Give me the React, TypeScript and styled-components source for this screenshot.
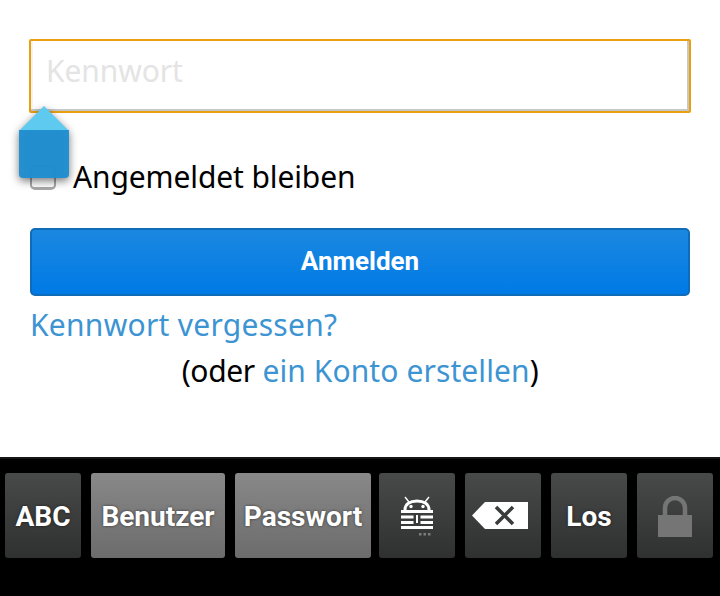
import React from 'react';
import styled, { createGlobalStyle } from 'styled-components';

const Global = createGlobalStyle`
    html, body {
        margin: 0;
        padding: 0;
        background: white;
    }
    body {
        font-family: "Noto Sans", "Open Sans", sans-serif;
    }
`;

const Page = styled.div`
    width: 720px;
    height: 596px;
    position: relative;
    overflow: hidden;
    display: flex;
    flex-direction: column;
`;

const Form = styled.div`
    height: 457px;
    box-sizing: border-box;
    padding: 39px 29px 0 29px;
    background: white;
`;

const PasswordField = styled.div`
    height: 74px;
    box-sizing: border-box;
    border: 2px solid #e8a010;
    border-radius: 2px;
    box-shadow: inset -2px -2px 0 #c4c8ca, inset 2px 0 0 #f4f4f4;
    padding: 0 15px 12px 15px;
    display: flex;
    align-items: center;
    font-size: 30px;
    letter-spacing: -0.1px;
    color: #e4e4e4;
`;

const RememberRow = styled.div`
    margin-top: 46px;
    padding-left: 1px;
    height: 36px;
    display: flex;
    align-items: center;
    gap: 17px;
    font-size: 30px;
    line-height: 34px;
    letter-spacing: -0.12px;
    color: #000;
`;

const Checkbox = styled.span`
    width: 26px;
    height: 25px;
    margin-top: 1px;
    box-sizing: border-box;
    border: 2px solid #a8a8a8;
    border-bottom-width: 3px;
    border-radius: 5px;
    background: #fff;
`;

const LoginButton = styled.div`
    margin: 33px 1px 0 1px;
    height: 68px;
    box-sizing: border-box;
    border: 2px solid #0f6cb8;
    border-radius: 5px;
    background: linear-gradient(#1b88e0, #007ae6);
    color: white;
    font-size: 26px;
    font-weight: 700;
    font-family: Roboto, sans-serif;
    padding-bottom: 2px;
    display: flex;
    align-items: center;
    justify-content: center;
`;

const Link = styled.a`
    color: #3d94d2;
`;

const SignupLink = styled(Link)`
    letter-spacing: 0.1px;
`;

const ForgotLine = styled.div`
    margin: 8px 0 0 1px;
    height: 42px;
    line-height: 42px;
    font-size: 30px;
    letter-spacing: 0.27px;
`;

const SignupLine = styled.div`
    margin-top: 4px;
    height: 42px;
    line-height: 42px;
    font-size: 30px;
    letter-spacing: -0.33px;
    text-align: center;
    color: #000;
`;

const Handle = styled.svg`
    position: absolute;
    left: 9px;
    top: 100px;
    filter: drop-shadow(0 3px 4px rgba(0, 0, 0, 0.55));
`;

const Keyboard = styled.div`
    flex: 1;
    background: #000;
    border-top: 2px solid #151515;
    box-sizing: border-box;
    padding: 14px 7px 0 5px;
    display: flex;
    align-items: flex-start;
    gap: 10px;
`;

const Key = styled.div<{ $w: number; $light?: boolean; $ml?: number }>`
    width: ${(p) => p.$w}px;
    margin-left: ${(p) => p.$ml || 0}px;
    height: 85px;
    flex-shrink: 0;
    box-sizing: border-box;
    padding-top: 2px;
    border-radius: 3px;
    background: ${(p) =>
        p.$light
            ? 'linear-gradient(#888888, #6c6c6c)'
            : 'linear-gradient(#484a4a, #2f3130)'};
    color: white;
    font-family: Roboto, sans-serif;
    font-weight: 700;
    font-size: 28px;
    text-shadow: 0 0 3px rgba(0, 0, 0, 0.6);
    display: flex;
    align-items: center;
    justify-content: center;
`;

const BackspaceSvg = styled.svg`
    margin: -2px 6px 0 0;
`;

function KeepassIcon() {
    return (
        <svg width="36" height="42" viewBox="0 0 36 42">
            <path d="M6 14 C6 8 11 5 18 5 C25 5 30 8 30 14" fill="none" stroke="white" strokeWidth="3" />
            <g stroke="white" strokeWidth="1.4">
                <path d="M10 6 L6 1" />
                <path d="M26 6 L30 1" />
            </g>
            <circle cx="12" cy="10.5" r="1.7" fill="white" />
            <circle cx="24" cy="10.5" r="1.7" fill="white" />
            <g fill="white">
                <rect x="2" y="14" width="32" height="3" />
                <rect x="2" y="19.5" width="32" height="3" />
                <rect x="2" y="25" width="32" height="3" />
                <rect x="2" y="30" width="32" height="3" />
            </g>
            <rect x="14.5" y="17" width="7" height="13" fill="#3a3c3c" />
            <rect x="17" y="19" width="2" height="8" fill="white" />
            <g fill="#7c7c7c">
                <rect x="20" y="37" width="2.5" height="2.5" />
                <rect x="24.5" y="37" width="2.5" height="2.5" />
                <rect x="29" y="37" width="2.5" height="2.5" />
            </g>
        </svg>
    );
}

function BackspaceIcon() {
    return (
        <BackspaceSvg width="56" height="27" viewBox="0 0 56 27">
            <path d="M0 13.5 L13 0 L56 0 L56 27 L13 27 Z" fill="white" />
            <path d="M24 5 L41 22 M41 5 L24 22" stroke="#3a3c3c" strokeWidth="3.5" />
        </BackspaceSvg>
    );
}

function LockIcon() {
    return (
        <svg width="34" height="42" viewBox="0 0 34 42">
            <path d="M7 20 L7 12 A10 10 0 0 1 27 12 L27 20" fill="none" stroke="#757575" strokeWidth="4.5" />
            <rect x="0" y="19" width="34" height="22" fill="#757575" />
        </svg>
    );
}

function App() {
    return (
        <Page>
            <Global />
            <Form>
                <PasswordField>Kennwort</PasswordField>
                <RememberRow>
                    <Checkbox />
                    Angemeldet bleiben
                </RememberRow>
                <LoginButton>Anmelden</LoginButton>
                <ForgotLine>
                    <Link>Kennwort vergessen?</Link>
                </ForgotLine>
                <SignupLine>
                    (oder <SignupLink>ein Konto erstellen</SignupLink>)
                </SignupLine>
            </Form>
            <Handle width="70" height="90" viewBox="0 0 70 90">
                <path d="M10 31 L35 6 L60 31 Z" fill="#5fcaef" />
                <path
                    d="M10 30 L60 30 L60 74 Q60 78 56 78 L14 78 Q10 78 10 74 Z"
                    fill="#1f8fd0"
                    fillOpacity="0.96"
                />
            </Handle>
            <Keyboard>
                <Key $w={76}>ABC</Key>
                <Key $w={134} $light>Benutzer</Key>
                <Key $w={136} $light>Passwort</Key>
                <Key $w={76} $ml={-2}><KeepassIcon /></Key>
                <Key $w={76}><BackspaceIcon /></Key>
                <Key $w={76}>Los</Key>
                <Key $w={76}><LockIcon /></Key>
            </Keyboard>
        </Page>
    );
}

export default App;
